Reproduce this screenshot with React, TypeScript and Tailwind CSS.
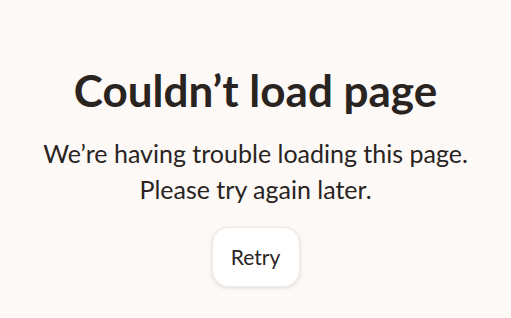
export default function App() {
  return (
    <div
      className="min-h-screen bg-[#fdf9f6] text-[#29241f] flex flex-col items-center pt-[62px]"
      style={{ fontFamily: "Lato, 'Noto Sans', sans-serif" }}
    >
      <h1 className="text-[44px] leading-[56px] font-bold">Couldn’t load page</h1>
      <p className="mt-[17px] text-[25px] leading-[36px] text-center">
        We’re having trouble loading this page.
        <br />
        Please try again later.
      </p>
      <button className="mt-[20px] w-[88px] h-[60px] rounded-[16px] bg-white text-[21px] shadow-[0_1px_4px_rgba(0,0,0,0.12)] border border-[#eeeae6]">
        Retry
      </button>
    </div>
  );
}
